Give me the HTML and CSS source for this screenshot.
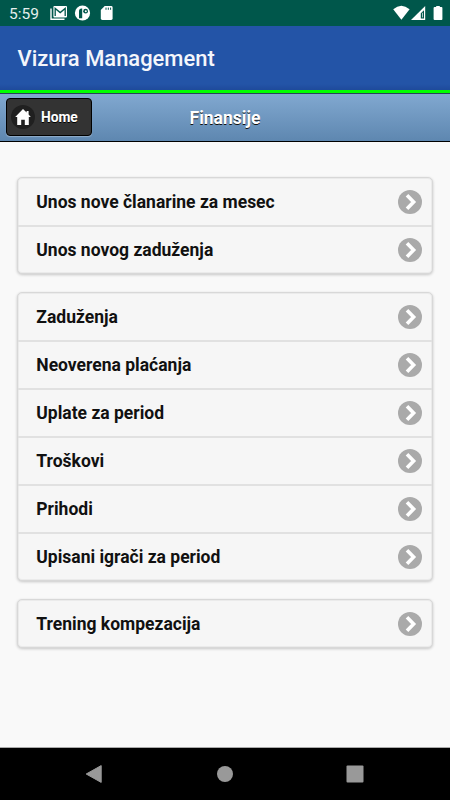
FILE: index.html
```html
<!DOCTYPE html>
<html lang="sr">
<head>
<meta charset="utf-8">
<title>Vizura Management</title>
<link rel="stylesheet" href="styles.css">
</head>
<body>
<svg class="defs" width="0" height="0">
  <symbol id="arrow" viewBox="0 0 24 24">
    <circle cx="12" cy="12" r="12" fill="#aaa"/>
    <path d="M9 5.3 L15.6 12 L9 18.7" fill="none" stroke="#fff" stroke-width="3.6"/>
  </symbol>
</svg>
<div class="status">
  <span class="clock">5:59</span>
  <svg class="notices" width="64" height="16" viewBox="0 0 64 16">
    <path d="M1 3.5V14.3H14.5" fill="none" stroke="#fff" stroke-width="1.4"/>
    <rect x="3.4" y="1" width="13.6" height="11.4" rx="1" fill="#fff"/>
    <path d="M5.2 11V3.4L10.2 7.6L15.2 3.4V11" fill="none" stroke="#00574b" stroke-width="1.3"/>
    <circle cx="32.5" cy="8" r="7.6" fill="#fff"/>
    <path d="M29.6 12.6V6.2Q29.6 4 31.6 4V12.6Z" fill="#00574b" stroke="#00574b" stroke-width="1.2"/>
    <circle cx="35.6" cy="6.2" r="2.4" fill="#00574b"/>
    <circle cx="35.8" cy="6.2" r="1" fill="#fff"/>
    <path d="M54.7 1H61.2Q62.6 1 62.6 2.4V13.6Q62.6 15 61.2 15H52.3Q50.8 15 50.8 13.6V5Z" fill="#fff"/>
    <path d="M56 2.6V4.8M58.3 2.6V4.8M60.6 2.6V4.8" stroke="#00574b" stroke-width="1"/>
  </svg>
  <svg class="signals" width="50" height="16" viewBox="0 0 50 16">
    <path d="M0.2 4.2Q8.3-2.8 16.6 4.2L8.4 14.8Z" fill="#fff"/>
    <path d="M32.2 1V15H18Z" fill="#fff"/>
    <path d="M31 5.2V13.4H27.8V8.3Z" fill="#00574b"/>
    <path d="M29.5 7.8V12.4" stroke="#fff" stroke-width="0.7"/>
    <path d="M41.6 2H43.2V1H46.8V2H48.5Q49.4 2 49.4 3V14Q49.4 15 48.5 15H41.6Q40.6 15 40.6 14V3Q40.6 2 41.6 2Z" fill="#fff"/>
  </svg>
</div>
<header class="appbar">Vizura Management</header>
<div class="toolbar">
  <a class="home">
    <svg width="24" height="24" viewBox="0 0 24 24">
      <circle cx="12" cy="12" r="12" fill="#202020"/>
      <path d="M12 4L4.2 12H6.2V20H10.2V14.8H13.8V20H17.8V12H19.8L17.6 9.6V6H15.6V7.6Z" fill="#fff"/>
    </svg>
    <span>Home</span>
  </a>
  <h1>Finansije</h1>
</div>
<main>
  <ul>
    <li><span>Unos nove članarine za mesec</span><svg><use href="#arrow"/></svg></li>
    <li><span>Unos novog zaduženja</span><svg><use href="#arrow"/></svg></li>
  </ul>
  <ul>
    <li><span>Zaduženja</span><svg><use href="#arrow"/></svg></li>
    <li><span>Neoverena plaćanja</span><svg><use href="#arrow"/></svg></li>
    <li><span>Uplate za period</span><svg><use href="#arrow"/></svg></li>
    <li><span>Troškovi</span><svg><use href="#arrow"/></svg></li>
    <li><span>Prihodi</span><svg><use href="#arrow"/></svg></li>
    <li><span>Upisani igrači za period</span><svg><use href="#arrow"/></svg></li>
  </ul>
  <ul>
    <li><span>Trening kompezacija</span><svg><use href="#arrow"/></svg></li>
  </ul>
</main>
<nav class="navbar">
  <svg width="18" height="20" viewBox="0 0 18 20"><path d="M1.2 10L16.2 1.6V18.4Z" fill="#999" stroke="#999" stroke-linejoin="round"/></svg>
  <svg width="18" height="20" viewBox="0 0 18 20"><circle cx="9" cy="10" r="8" fill="#999"/></svg>
  <svg width="18" height="20" viewBox="0 0 18 20"><rect x="0.5" y="1.5" width="17" height="17" rx="1" fill="#999"/></svg>
</nav>
</body>
</html>
```

FILE: styles.css
```css
* { box-sizing: border-box; }
body {
  margin: 0;
  width: 450px;
  height: 800px;
  display: flex;
  flex-direction: column;
  overflow: hidden;
  background: #f9f9f9;
  font-family: Roboto, "Liberation Sans", sans-serif;
}
svg { display: block; flex: none; }
.defs { position: absolute; }
.status {
  height: 26px;
  flex: none;
  display: flex;
  align-items: center;
  padding: 0 7.5px 0 9px;
  background: #00574b;
}
.clock {
  width: 41px;
  font-size: 15.5px;
  line-height: 26px;
  padding-top: 1px;
  color: #e6efed;
}
.signals { margin-left: auto; }
.appbar {
  height: 64px;
  flex: none;
  padding-left: 17.5px;
  line-height: 65px;
  font-size: 21.95px;
  font-weight: 500;
  color: #f4f6fb;
  background: linear-gradient(#2354a7 58px, #1e4a9b);
}
.toolbar {
  height: 52px;
  flex: none;
  display: grid;
  grid-template-columns: 86px 1fr 86px;
  align-items: center;
  padding: 0 6px;
  border-top: 3px solid #00ff00;
  border-bottom: 1px solid #000;
  background: linear-gradient(#29435a 0 1px, #81a8d0 1px, #5e87b0);
  color: #fff;
  font-weight: 700;
}
.home {
  height: 38px;
  display: flex;
  align-items: center;
  gap: 5.5px;
  padding-left: 4.4px;
  border: 1px solid #000;
  border-radius: 4px;
  background: #333;
  box-shadow: 0 1px 1px rgba(255,255,255,.3);
  font-size: 13.8px;
  text-shadow: 0 1px 0 #000;
}
h1 {
  margin: 2px 0 0;
  text-align: center;
  font-size: 17.5px;
  line-height: 24px;
  text-shadow: 0 1px 0 #111;
}
main {
  flex: 1;
  padding: 35.3px 17.3px 0;
}
ul {
  list-style: none;
  margin: 0 0 17.9px;
  padding: 0;
  border: 1px solid #d8d8d8;
  border-radius: 5px;
  background: #f6f6f6;
  box-shadow: inset 0 0 0 1px #ebebeb, 0 1px 3px rgba(0,0,0,.2);
}
li {
  height: 48.05px;
  display: flex;
  align-items: center;
  justify-content: space-between;
  padding: 0 9.7px 0 18px;
  font-size: 17.5px;
  line-height: 20px;
  font-weight: 700;
  color: #111;
}
li:first-child { height: 47px; }
li + li { border-top: 2px solid #e1e1e1; }
li svg { width: 24px; height: 24px; }
.navbar {
  height: 53px;
  flex: none;
  display: flex;
  align-items: center;
  justify-content: space-between;
  padding: 0 86px 0 85px;
  border-top: 1px solid #aaa;
  background: #000;
}
```
